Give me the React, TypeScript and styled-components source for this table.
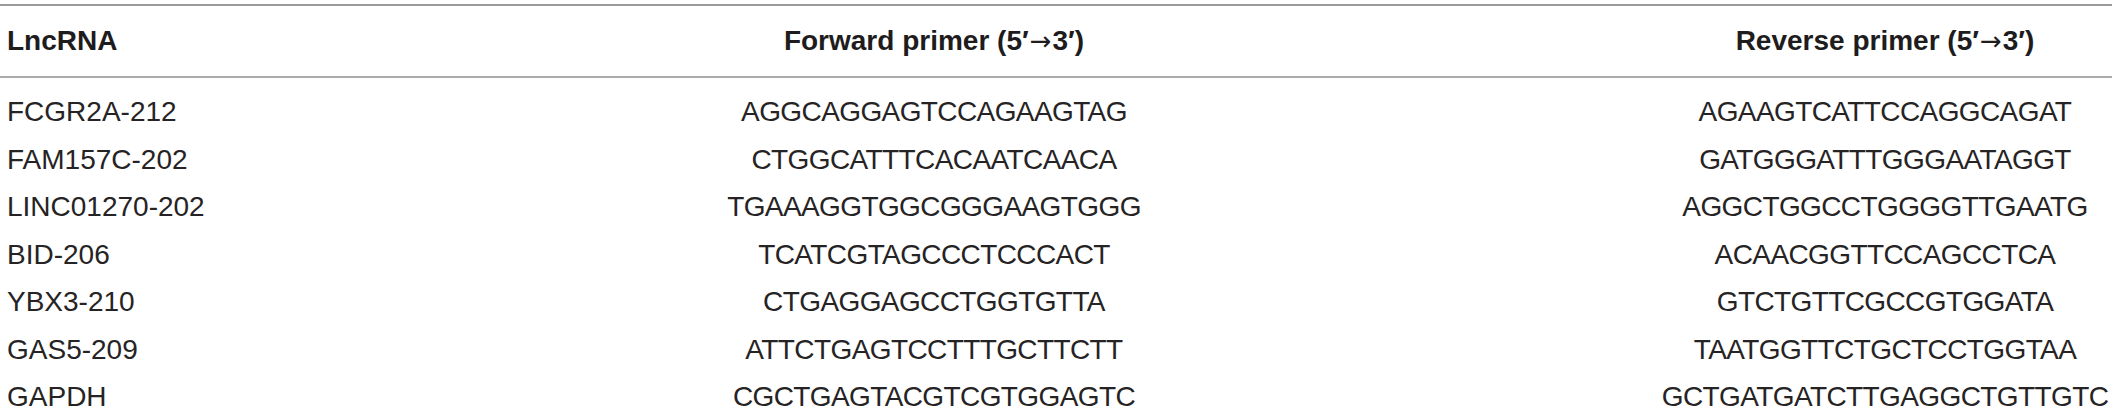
import React from "react"
import styled, { createGlobalStyle } from "styled-components"

const rows = [
  ["FCGR2A-212", "AGGCAGGAGTCCAGAAGTAG", "AGAAGTCATTCCAGGCAGAT"],
  ["FAM157C-202", "CTGGCATTTCACAATCAACA", "GATGGGATTTGGGAATAGGT"],
  ["LINC01270-202", "TGAAAGGTGGCGGGAAGTGGG", "AGGCTGGCCTGGGGTTGAATG"],
  ["BID-206", "TCATCGTAGCCCTCCCACT", "ACAACGGTTCCAGCCTCA"],
  ["YBX3-210", "CTGAGGAGCCTGGTGTTA", "GTCTGTTCGCCGTGGATA"],
  ["GAS5-209", "ATTCTGAGTCCTTTGCTTCTT", "TAATGGTTCTGCTCCTGGTAA"],
  ["GAPDH", "CGCTGAGTACGTCGTGGAGTC", "GCTGATGATCTTGAGGCTGTTGTC"],
]

const Global = createGlobalStyle`
  body {
    margin: 0;
    background: #ffffff;
    font-family: "Liberation Sans", Arial, sans-serif;
    color: #262324;
  }
`

export default function App() {
  return (
    <>
      <Global />
      <Table>
        <Head>
          <Cell align='left'>LncRNA</Cell>
          <Cell align='center'>
            Forward primer (5′<Arrow>→</Arrow>3′)
          </Cell>
          <Cell align='center'>
            Reverse primer (5′<Arrow>→</Arrow>3′)
          </Cell>
        </Head>
        <Body>
          {rows.map((row, index) => {
            return (
              <Row key={index}>
                <Cell align='left'>{row[0]}</Cell>
                <Seq>{row[1]}</Seq>
                <Seq>{row[2]}</Seq>
              </Row>
            )
          })}
        </Body>
      </Table>
    </>
  )
}

const Table = styled.div`
  width: 2112px;
  margin-top: 4px;
  border-top: 2px solid #9a9a9a;
`
const Head = styled.div`
  display: grid;
  grid-template-columns: 210px 1448px 454px;
  height: 70px;
  line-height: 70px;
  font-size: 28px;
  font-weight: bold;
  color: #1e1c1d;
  border-bottom: 2px solid #ababab;
`
const Arrow = styled.span`
  font-family: "DejaVu Sans", sans-serif;
  font-weight: normal;
  font-size: 26px;
  margin: 0 1px;
`
const Body = styled.div`
  padding-top: 10px;
`
const Row = styled.div`
  display: grid;
  grid-template-columns: 210px 1448px 454px;
  height: 47.5px;
  line-height: 47.5px;
  font-size: 28px;
`
const Cell = styled.div<{ align: string }>`
  text-align: ${({ align }) => align};
  padding-left: ${({ align }) => (align === "left" ? "7px" : "0")};
  white-space: nowrap;
`
const Seq = styled.div`
  text-align: center;
  white-space: nowrap;
  letter-spacing: -0.6px;
`
